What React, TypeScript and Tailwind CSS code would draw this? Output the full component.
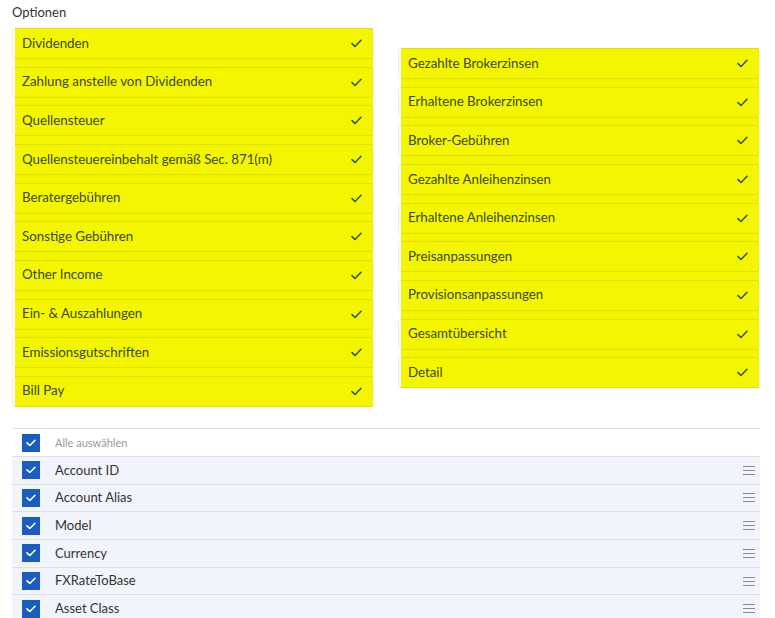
import React from 'react';

const leftOptions = [
  'Dividenden',
  'Zahlung anstelle von Dividenden',
  'Quellensteuer',
  'Quellensteuereinbehalt gemäß Sec. 871(m)',
  'Beratergebühren',
  'Sonstige Gebühren',
  'Other Income',
  'Ein- & Auszahlungen',
  'Emissionsgutschriften',
  'Bill Pay',
];

const rightOptions = [
  'Gezahlte Brokerzinsen',
  'Erhaltene Brokerzinsen',
  'Broker-Gebühren',
  'Gezahlte Anleihenzinsen',
  'Erhaltene Anleihenzinsen',
  'Preisanpassungen',
  'Provisionsanpassungen',
  'Gesamtübersicht',
  'Detail',
];

const fields = ['Account ID', 'Account Alias', 'Model', 'Currency', 'FXRateToBase', 'Asset Class'];

const Check = () => (
  <svg width="11" height="9" viewBox="0 0 11 9" fill="none">
    <path d="M1 4.6 L4 7.5 L10 1.3" stroke="#2c5214" strokeWidth="1.5" strokeLinecap="round" strokeLinejoin="round" />
  </svg>
);

const OptionColumn: React.FC<{ items: string[]; className?: string }> = ({ items, className }) => (
  <div
    className={`flex flex-col gap-[7.67px] bg-[linear-gradient(to_right,transparent_3px,#f3f600_3px,#f3f600_calc(100%-1px),transparent_calc(100%-1px))] ${className ?? ''}`}
  >
    {items.map((item) => (
      <div
        key={item}
        className="h-[31px] rounded-[3px] border border-black/[0.08] flex items-center justify-between pl-[9px] pr-[11px]"
      >
        <span className="text-[13.3px] text-[#3d4718]">{item}</span>
        <Check />
      </div>
    ))}
  </div>
);

const BlueBox = () => (
  <div className="w-[18px] h-[18px] bg-[#1a5cbf] flex items-center justify-center">
    <svg width="10" height="8" viewBox="0 0 10 8" fill="none">
      <path d="M1 3.8 L3.8 6.5 L9 1.3" stroke="white" strokeWidth="1.6" strokeLinecap="round" strokeLinejoin="round" />
    </svg>
  </div>
);

const Handle = () => (
  <div className="flex flex-col gap-[3px] w-[12px]">
    <div className="h-px bg-[#8a8a8a]" />
    <div className="h-px bg-[#8a8a8a]" />
    <div className="h-px bg-[#8a8a8a]" />
  </div>
);

export default function App() {
  return (
    <div className="h-[618px] overflow-hidden bg-white pl-[12px] pr-[15px] pt-[4px] font-['Lato','Open_Sans',sans-serif]">
      <div className="text-[13px] text-[#333] leading-[16px] h-[24px]">Optionen</div>
      <div className="flex gap-[24px] items-start">
        <OptionColumn items={leftOptions} className="flex-1" />
        <OptionColumn items={rightOptions} className="flex-1 mt-[20px]" />
      </div>
      <div className="mt-[21px] border-t border-[#e4e4e4]">
        <div className="h-[27px] flex items-center pl-[10px] pt-[2px]">
          <BlueBox />
          <span className="ml-[15px] text-[11px] text-[#999]">Alle auswählen</span>
        </div>
        {fields.map((f) => (
          <div
            key={f}
            className="h-[27.7px] flex items-center pl-[10px] pr-[5px] bg-[#f1f4fa] border-t border-[#dcdfe6]"
          >
            <BlueBox />
            <span className="ml-[15px] text-[13px] text-[#333] flex-1">{f}</span>
            <Handle />
          </div>
        ))}
      </div>
    </div>
  );
}
